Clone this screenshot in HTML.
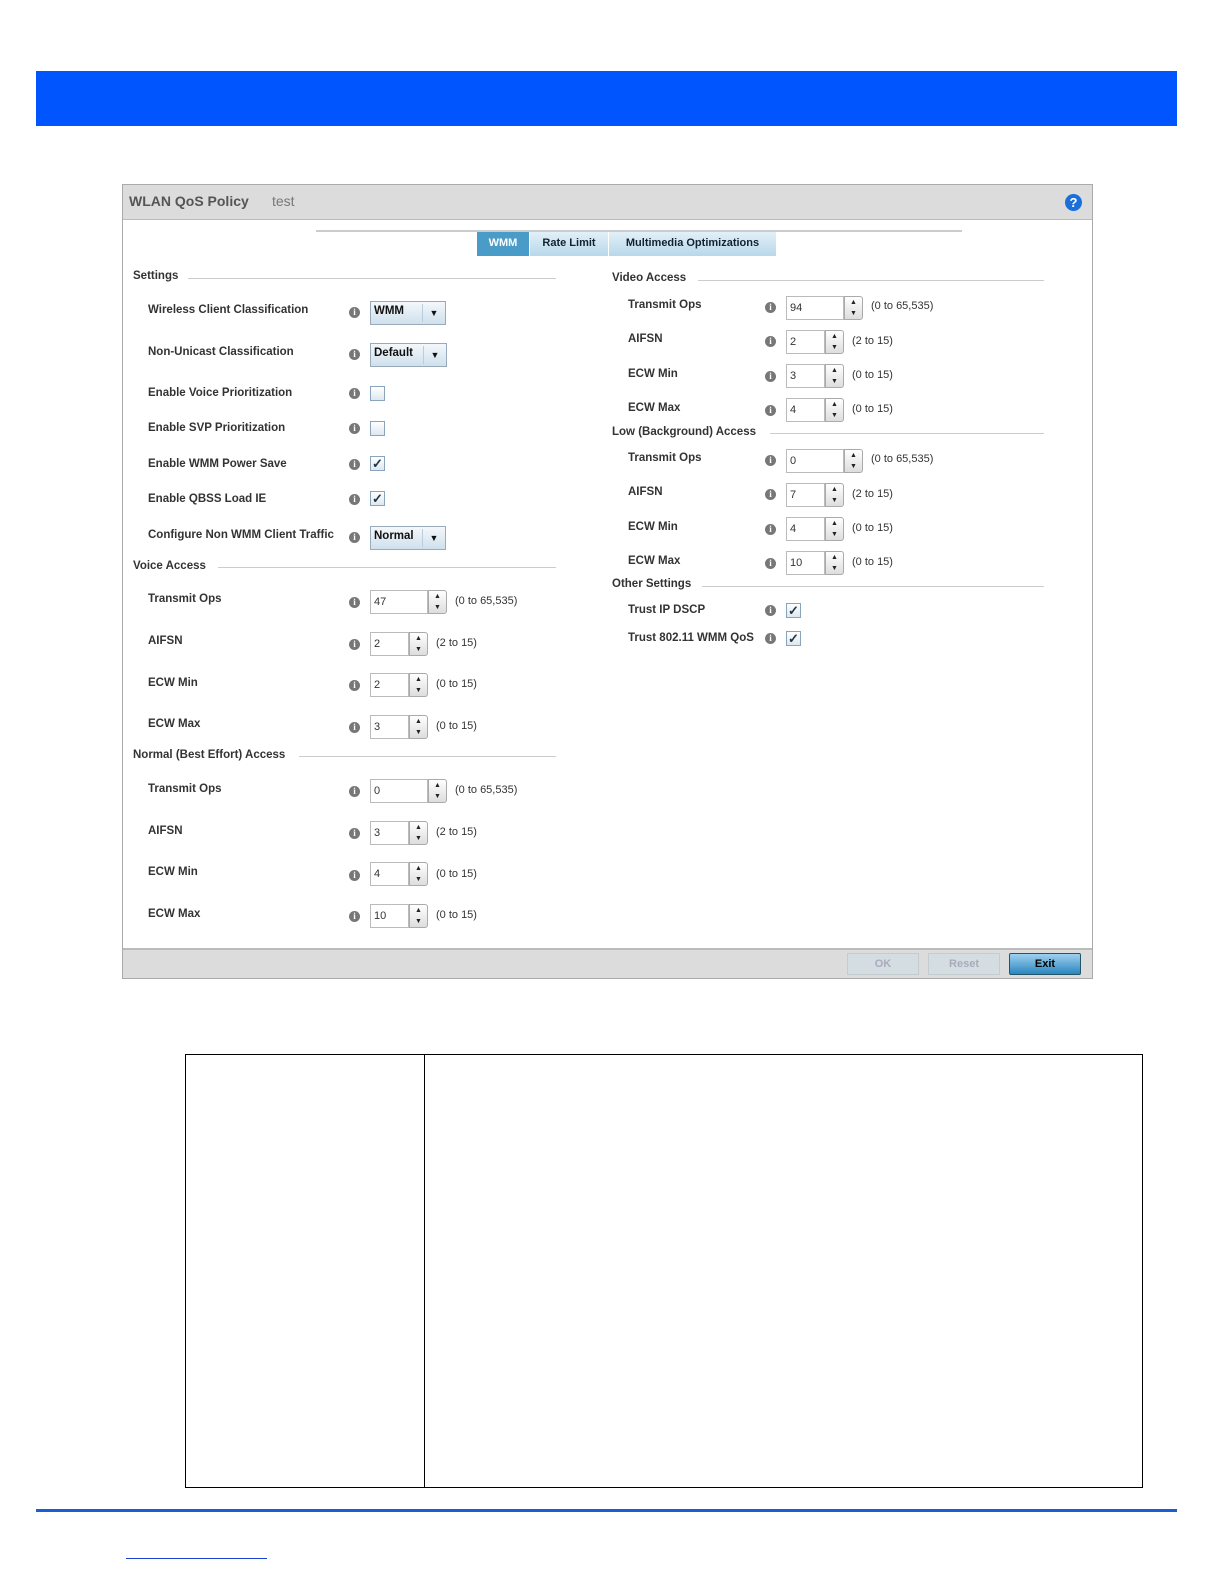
<!DOCTYPE html><html style="width:1224px;height:1584px;overflow:hidden;margin:0"><head><style>
body{margin:0;width:1224px;height:1584px;position:relative;background:#fff;font-family:"Liberation Sans",sans-serif;overflow:hidden}
div,span{position:absolute;box-sizing:border-box}
.l{font-size:11.5px;font-weight:bold;color:#333;white-space:nowrap}
.h{font-size:11.5px;font-weight:bold;color:#333;white-space:nowrap}
.ln{height:1px;background:#ccc}
.i{width:11px;height:11px;border-radius:50%;background:#777;color:#fff;font-size:9px;font-weight:bold;text-align:center;line-height:11px;font-family:"Liberation Serif",serif}
.sel{height:24px;border:1px solid #9ab;background:linear-gradient(#f4f8fb,#cfe0ec);font-size:11.5px;font-weight:bold;color:#111;padding:3px 0 0 3px;overflow:hidden}
.sel b{position:absolute;right:0;top:2px;width:22px;height:18px;border-left:1px solid #bcd;font-size:9px;text-align:center;line-height:18px}
.inp{height:24px;border:1px solid #bbb;background:#fff;font-size:11px;color:#333;padding:5px 0 0 3px}
.sp{width:19px;height:24px;border:1px solid #aaa;border-radius:0 3px 3px 0;background:linear-gradient(#fff,#ddd);font-size:7px;text-align:center;line-height:11px;color:#222;overflow:hidden}
.r{font-size:11px;color:#333;white-space:nowrap}
.cb{width:15px;height:15px;border:1px solid #8aa4bd;background:linear-gradient(#fff,#dde8f0);font-size:13px;font-weight:bold;line-height:13px;text-align:center;color:#234;overflow:hidden}
</style></head><body>
<div style="left:36px;top:71px;width:1141px;height:55px;background:#0055ff"></div>
<div style="left:122px;top:184px;width:971px;height:795px;border:1px solid #aaa;background:#fff"></div>
<div style="left:123px;top:185px;width:969px;height:35px;background:#dcdcdc;border-bottom:1px solid #bbb"></div>
<div style="left:129px;top:193px;font-size:14px;font-weight:bold;color:#555">WLAN QoS Policy</div>
<div style="left:272px;top:193px;font-size:14px;color:#777">test</div>
<div style="left:1065px;top:194px;width:17px;height:17px;border-radius:50%;background:#1a6fd8;color:#fff;font-size:13px;font-weight:bold;text-align:center;line-height:17px">?</div>
<div style="left:316px;top:230px;width:646px;height:2px;background:#ccc"></div>
<div style="left:477px;top:232px;width:52px;height:24px;background:#4a9cc8;color:#fff;font-size:11px;font-weight:bold;text-align:center;line-height:22px">WMM</div>
<div style="left:530px;top:232px;width:78px;height:24px;background:linear-gradient(#e2f0f8,#b8d8ea);color:#123;font-size:11px;font-weight:bold;text-align:center;line-height:22px">Rate Limit</div>
<div style="left:609px;top:232px;width:167px;height:24px;background:linear-gradient(#e2f0f8,#b8d8ea);color:#123;font-size:11px;font-weight:bold;text-align:center;line-height:22px">Multimedia Optimizations</div>
<div style="left:123px;top:948px;width:969px;height:30px;background:#dcdcdc;border-top:2px solid #bbb"></div>
<div style="left:847px;top:953px;width:72px;height:22px;background:#d4dde2;border:1px solid #c4ccd0;color:#aab;font-size:11px;font-weight:bold;text-align:center;line-height:20px">OK</div>
<div style="left:928px;top:953px;width:72px;height:22px;background:#d4dde2;border:1px solid #c4ccd0;color:#aab;font-size:11px;font-weight:bold;text-align:center;line-height:20px">Reset</div>
<div style="left:1009px;top:953px;width:72px;height:22px;background:linear-gradient(#9fd0ee,#2a86c0);border:1px solid #256;border-radius:2px;color:#000;font-size:11px;font-weight:bold;text-align:center;line-height:20px">Exit</div>

<div class="h" style="left:133px;top:270px">Settings</div><div class="ln" style="left:188px;top:278px;width:368px"></div>
<div class="l" style="left:148px;top:304px">Wireless Client Classification</div><div class="i" style="left:349px;top:307px">i</div><div class="sel" style="left:370px;top:301px;width:76px">WMM<b>▼</b></div>
<div class="l" style="left:148px;top:346px">Non-Unicast Classification</div><div class="i" style="left:349px;top:349px">i</div><div class="sel" style="left:370px;top:343px;width:77px">Default<b>▼</b></div>
<div class="l" style="left:148px;top:387px">Enable Voice Prioritization</div><div class="i" style="left:349px;top:388px">i</div><div class="cb" style="left:370px;top:386px"></div>
<div class="l" style="left:148px;top:422px">Enable SVP Prioritization</div><div class="i" style="left:349px;top:423px">i</div><div class="cb" style="left:370px;top:421px"></div>
<div class="l" style="left:148px;top:458px">Enable WMM Power Save</div><div class="i" style="left:349px;top:459px">i</div><div class="cb" style="left:370px;top:456px">✓</div>
<div class="l" style="left:148px;top:493px">Enable QBSS Load IE</div><div class="i" style="left:349px;top:494px">i</div><div class="cb" style="left:370px;top:491px">✓</div>
<div class="l" style="left:148px;top:529px">Configure Non WMM Client Traffic</div><div class="i" style="left:349px;top:532px">i</div><div class="sel" style="left:370px;top:526px;width:76px">Normal<b>▼</b></div>

<div class="h" style="left:133px;top:560px">Voice Access</div><div class="ln" style="left:218px;top:567px;width:338px"></div>
<div class="l" style="left:148px;top:593px">Transmit Ops</div><div class="i" style="left:349px;top:597px">i</div><div class="inp" style="left:370px;top:590px;width:58px">47</div><div class="sp" style="left:428px;top:590px">▲<br>▼</div><div class="r" style="left:455px;top:595px">(0 to 65,535)</div>
<div class="l" style="left:148px;top:635px">AIFSN</div><div class="i" style="left:349px;top:639px">i</div><div class="inp" style="left:370px;top:632px;width:39px">2</div><div class="sp" style="left:409px;top:632px">▲<br>▼</div><div class="r" style="left:436px;top:637px">(2 to 15)</div>
<div class="l" style="left:148px;top:677px">ECW Min</div><div class="i" style="left:349px;top:680px">i</div><div class="inp" style="left:370px;top:673px;width:39px">2</div><div class="sp" style="left:409px;top:673px">▲<br>▼</div><div class="r" style="left:436px;top:678px">(0 to 15)</div>
<div class="l" style="left:148px;top:718px">ECW Max</div><div class="i" style="left:349px;top:722px">i</div><div class="inp" style="left:370px;top:715px;width:39px">3</div><div class="sp" style="left:409px;top:715px">▲<br>▼</div><div class="r" style="left:436px;top:720px">(0 to 15)</div>

<div class="h" style="left:133px;top:749px">Normal (Best Effort) Access</div><div class="ln" style="left:299px;top:756px;width:257px"></div>
<div class="l" style="left:148px;top:783px">Transmit Ops</div><div class="i" style="left:349px;top:786px">i</div><div class="inp" style="left:370px;top:779px;width:58px">0</div><div class="sp" style="left:428px;top:779px">▲<br>▼</div><div class="r" style="left:455px;top:784px">(0 to 65,535)</div>
<div class="l" style="left:148px;top:825px">AIFSN</div><div class="i" style="left:349px;top:828px">i</div><div class="inp" style="left:370px;top:821px;width:39px">3</div><div class="sp" style="left:409px;top:821px">▲<br>▼</div><div class="r" style="left:436px;top:826px">(2 to 15)</div>
<div class="l" style="left:148px;top:866px">ECW Min</div><div class="i" style="left:349px;top:870px">i</div><div class="inp" style="left:370px;top:862px;width:39px">4</div><div class="sp" style="left:409px;top:862px">▲<br>▼</div><div class="r" style="left:436px;top:868px">(0 to 15)</div>
<div class="l" style="left:148px;top:908px">ECW Max</div><div class="i" style="left:349px;top:911px">i</div><div class="inp" style="left:370px;top:904px;width:39px">10</div><div class="sp" style="left:409px;top:904px">▲<br>▼</div><div class="r" style="left:436px;top:909px">(0 to 15)</div>

<div class="h" style="left:612px;top:272px">Video Access</div><div class="ln" style="left:698px;top:280px;width:346px"></div>
<div class="l" style="left:628px;top:299px">Transmit Ops</div><div class="i" style="left:765px;top:302px">i</div><div class="inp" style="left:786px;top:296px;width:58px">94</div><div class="sp" style="left:844px;top:296px">▲<br>▼</div><div class="r" style="left:871px;top:300px">(0 to 65,535)</div>
<div class="l" style="left:628px;top:333px">AIFSN</div><div class="i" style="left:765px;top:336px">i</div><div class="inp" style="left:786px;top:330px;width:39px">2</div><div class="sp" style="left:825px;top:330px">▲<br>▼</div><div class="r" style="left:852px;top:335px">(2 to 15)</div>
<div class="l" style="left:628px;top:368px">ECW Min</div><div class="i" style="left:765px;top:371px">i</div><div class="inp" style="left:786px;top:364px;width:39px">3</div><div class="sp" style="left:825px;top:364px">▲<br>▼</div><div class="r" style="left:852px;top:369px">(0 to 15)</div>
<div class="l" style="left:628px;top:402px">ECW Max</div><div class="i" style="left:765px;top:405px">i</div><div class="inp" style="left:786px;top:398px;width:39px">4</div><div class="sp" style="left:825px;top:398px">▲<br>▼</div><div class="r" style="left:852px;top:403px">(0 to 15)</div>

<div class="h" style="left:612px;top:426px">Low (Background) Access</div><div class="ln" style="left:770px;top:433px;width:274px"></div>
<div class="l" style="left:628px;top:452px">Transmit Ops</div><div class="i" style="left:765px;top:455px">i</div><div class="inp" style="left:786px;top:449px;width:58px">0</div><div class="sp" style="left:844px;top:449px">▲<br>▼</div><div class="r" style="left:871px;top:453px">(0 to 65,535)</div>
<div class="l" style="left:628px;top:486px">AIFSN</div><div class="i" style="left:765px;top:489px">i</div><div class="inp" style="left:786px;top:483px;width:39px">7</div><div class="sp" style="left:825px;top:483px">▲<br>▼</div><div class="r" style="left:852px;top:488px">(2 to 15)</div>
<div class="l" style="left:628px;top:521px">ECW Min</div><div class="i" style="left:765px;top:524px">i</div><div class="inp" style="left:786px;top:517px;width:39px">4</div><div class="sp" style="left:825px;top:517px">▲<br>▼</div><div class="r" style="left:852px;top:522px">(0 to 15)</div>
<div class="l" style="left:628px;top:555px">ECW Max</div><div class="i" style="left:765px;top:558px">i</div><div class="inp" style="left:786px;top:551px;width:39px">10</div><div class="sp" style="left:825px;top:551px">▲<br>▼</div><div class="r" style="left:852px;top:556px">(0 to 15)</div>

<div class="h" style="left:612px;top:578px">Other Settings</div><div class="ln" style="left:702px;top:586px;width:342px"></div>
<div class="l" style="left:628px;top:604px">Trust IP DSCP</div><div class="i" style="left:765px;top:605px">i</div><div class="cb" style="left:786px;top:603px">✓</div>
<div class="l" style="left:628px;top:632px">Trust 802.11 WMM QoS</div><div class="i" style="left:765px;top:633px">i</div><div class="cb" style="left:786px;top:631px">✓</div>

<div style="left:185px;top:1054px;width:958px;height:434px;border:1px solid #000"></div>
<div style="left:424px;top:1054px;width:1px;height:434px;background:#000"></div>
<div style="left:36px;top:1509px;width:1141px;height:3px;background:#1a5fd0"></div>
<div style="left:126px;top:1558px;width:141px;height:1px;background:#1a3fd0"></div>
</body></html>
